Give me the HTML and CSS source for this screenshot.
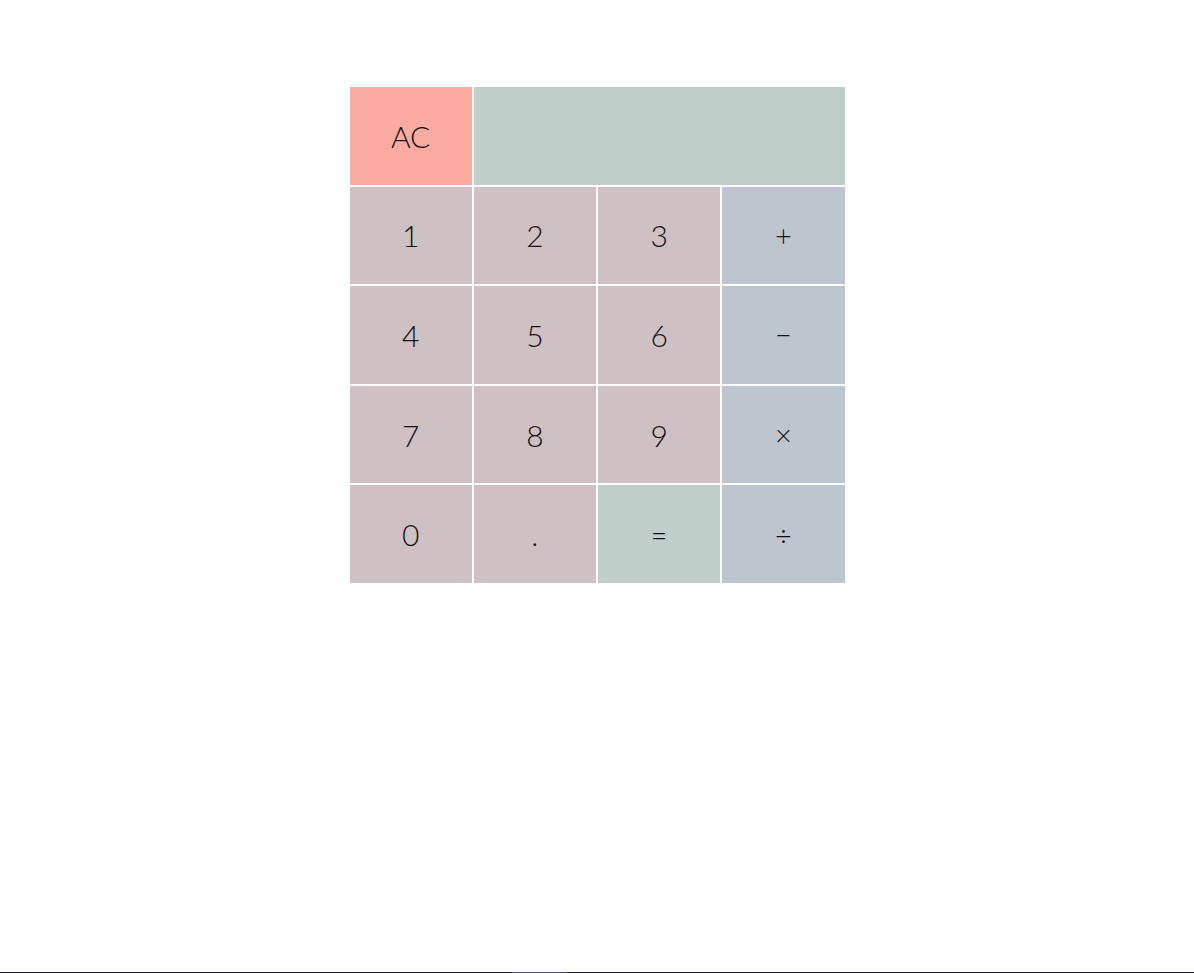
FILE: index.html
```html
<!DOCTYPE html>
<html lang="en">
<head>
<meta charset="utf-8">
<title>Calculator</title>
<link rel="stylesheet" href="styles.css">
</head>
<body>
<main class="calculator">
  <button class="key key-clear">AC</button>
  <div class="display"></div>
  <button class="key key-num">1</button>
  <button class="key key-num">2</button>
  <button class="key key-num">3</button>
  <button class="key key-op">+</button>
  <button class="key key-num">4</button>
  <button class="key key-num">5</button>
  <button class="key key-num">6</button>
  <button class="key key-op">&minus;</button>
  <button class="key key-num">7</button>
  <button class="key key-num">8</button>
  <button class="key key-num">9</button>
  <button class="key key-op">&times;</button>
  <button class="key key-num">0</button>
  <button class="key key-num">.</button>
  <button class="key key-eq">=</button>
  <button class="key key-op">&divide;</button>
</main>
<div class="edge-bar"></div>
</body>
</html>
```

FILE: styles.css
```css
html, body {
  margin: 0;
  padding: 0;
  background: #ffffff;
}

body {
  padding-top: 87px;
  font-family: "Lato", "Open Sans", sans-serif;
}

.calculator {
  width: 495px;
  height: 496px;
  margin: 0 auto;
  display: grid;
  grid-template-columns: repeat(4, 1fr);
  grid-template-rows: repeat(5, 1fr);
  gap: 2px;
  background: #ffffff;
}

.key {
  border: none;
  margin: 0;
  padding: 0;
  font-family: "Lato", "Open Sans", sans-serif;
  font-weight: 300;
  font-size: 30px;
  color: #111111;
  display: flex;
  align-items: center;
  justify-content: center;
}

.key-clear {
  background: #fcaba3;
}

.display {
  grid-column: span 3;
  background: #bfcec9;
}

.key-num {
  background: #cfc0c3;
}

.key-op {
  background: #bec5cf;
  font-size: 29px;
}

.key-eq {
  background: #bfcec9;
  font-size: 29px;
}

.edge-bar {
  position: fixed;
  left: 0;
  right: 0;
  bottom: 0;
  height: 1px;
  background: linear-gradient(to right, #1c1230 0, #1c1230 512px, #5b4585 512px, #5b4585 567px, #1c1230 567px, #1c1230 100%);
}
```
